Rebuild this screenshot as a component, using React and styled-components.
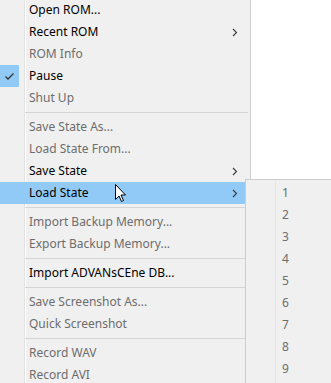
import React from "react";
import styled, { createGlobalStyle } from "styled-components";

const Global = createGlobalStyle`
  html, body { margin: 0; padding: 0; background: #ffffff; }
  body { width: 331px; height: 383px; overflow: hidden; font-family: "Noto Sans", "Open Sans", sans-serif; }
  #root { position: relative; width: 331px; height: 383px; overflow: hidden; }
`;

const Menu = styled.div`
  width: 250px;
  margin-top: -1px;
  border-right: 1px solid #cccccc;
  background: linear-gradient(
    to right,
    #f0f0f0 24px,
    #e2e2e2 24px,
    #e2e2e2 25px,
    #ffffff 25px,
    #ffffff 26px,
    #f0f0f0 26px
  );
  display: flex;
  flex-direction: column;
`;

const Row = styled.div`
  height: 22px;
  margin-right: 2px;
  display: grid;
  grid-template-columns: 29px 1fr 20px;
  align-items: center;
  font-size: 12px;
  color: ${(p) => (p.$disabled ? "#6d6d6d" : "#000000")};
  background: ${(p) => (p.$hot ? "#91c9f7" : "transparent")};
  white-space: nowrap;
`;

const CheckBox = styled.div`
  width: 19px;
  height: 22px;
  background: #91c9f7;
  display: flex;
  align-items: center;
  justify-content: center;
`;

const Label = styled.span`
  line-height: 22px;
`;

const Arrow = styled.div`
  display: flex;
  align-items: center;
  justify-content: flex-start;
  padding-left: 4px;
`;

const Sep = styled.div`
  height: 7px;
  display: flex;
  align-items: flex-start;
  padding-top: 3px;
  box-sizing: border-box;
  padding-left: 25px;
  padding-right: 2px;
  &::after {
    content: "";
    display: block;
    flex: 1;
    height: 1px;
    background: #d5d5d5;
  }
`;

const SubMenu = styled.div`
  position: absolute;
  left: 245px;
  top: 179px;
  width: 110px;
  padding: 2px 0 10px;
  border: 1px solid #cccccc;
  background: linear-gradient(
    to right,
    #f0f0f0 29px,
    #e6e6e6 29px,
    #e6e6e6 30px,
    #f0f0f0 30px
  );
  display: flex;
  flex-direction: column;
`;

const SubRow = styled.div`
  height: 22px;
  line-height: 22px;
  padding-left: 36px;
  font-size: 12px;
  color: #6d6d6d;
`;

const Pointer = styled.svg`
  position: absolute;
  left: 114px;
  top: 183px;
`;

const Chevron = () => (
  <svg width="6" height="9" viewBox="0 0 6 9">
    <polyline points="1,1 4.5,4.5 1,8" fill="none" stroke="#3a3a3a" strokeWidth="1.1" />
  </svg>
);

const Check = () => (
  <svg width="11" height="9" viewBox="0 0 11 9">
    <polyline points="1.5,4.5 4,7 9.5,1.5" fill="none" stroke="#333333" strokeWidth="1.3" />
  </svg>
);

const items = [
  { t: "Open ROM..." },
  { t: "Recent ROM", sub: true },
  { t: "ROM Info", d: true },
  { t: "Pause", check: true },
  { t: "Shut Up", d: true },
  { sep: true },
  { t: "Save State As...", d: true },
  { t: "Load State From...", d: true },
  { t: "Save State", sub: true },
  { t: "Load State", sub: true, hot: true },
  { sep: true },
  { t: "Import Backup Memory...", d: true },
  { t: "Export Backup Memory...", d: true },
  { sep: true },
  { t: "Import ADVANsCEne DB..." },
  { sep: true },
  { t: "Save Screenshot As...", d: true },
  { t: "Quick Screenshot", d: true },
  { sep: true },
  { t: "Record WAV", d: true },
  { t: "Record AVI", d: true },
];

export default function App() {
  return (
    <>
      <Global />
      <Menu>
        {items.map((it, i) =>
          it.sep ? (
            <Sep key={i} />
          ) : (
            <Row key={i} $disabled={it.d} $hot={it.hot}>
              <div>{it.check && <CheckBox><Check /></CheckBox>}</div>
              <Label>{it.t}</Label>
              <Arrow>{it.sub && <Chevron />}</Arrow>
            </Row>
          )
        )}
      </Menu>
      <SubMenu>
        {[1, 2, 3, 4, 5, 6, 7, 8, 9].map((n) => (
          <SubRow key={n}>{n}</SubRow>
        ))}
      </SubMenu>
      <Pointer width="13" height="20" viewBox="0 0 13 20">
        <path
          d="M1.5,1.5 L1.5,16.5 L5,13 L7.5,18.5 L9.5,17.5 L7,12 L11.5,12 Z"
          fill="#ffffff"
          stroke="#000000"
          strokeWidth="1"
          strokeLinejoin="miter"
        />
      </Pointer>
    </>
  );
}
